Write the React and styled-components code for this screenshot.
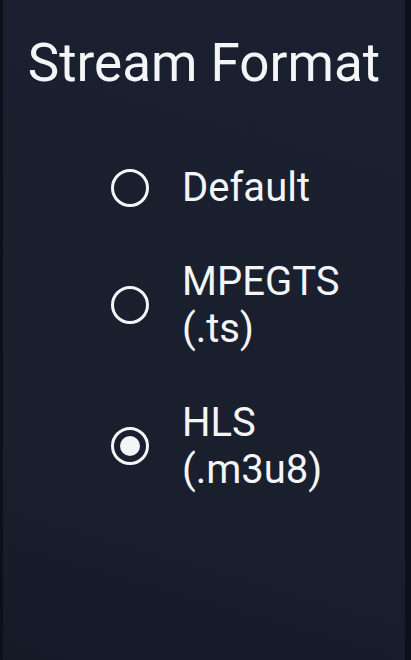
import styled, { createGlobalStyle } from "styled-components";

const GlobalStyle = createGlobalStyle`
  html, body {
    margin: 0;
    padding: 0;
    background: #0c101b;
  }
  body {
    font-family: Roboto, "Noto Sans", "Liberation Sans", sans-serif;
  }
`;

const Screen = styled.div`
  height: 660px;
  margin: 0 6px 0 3px;
  background: linear-gradient(196deg, #1b2030 0%, #1a1f2e 72%, #151a27 100%);
  display: flex;
  flex-direction: column;
  align-items: center;
  padding-top: 32px;
  box-sizing: border-box;
`;

const Title = styled.h1`
  margin: 0;
  font-size: 53px;
  font-weight: 400;
  color: #f4f5f7;
  white-space: nowrap;
`;

const Options = styled.div`
  align-self: stretch;
  display: flex;
  flex-direction: column;
  gap: 47px;
  margin-top: 70px;
  padding-left: 108px;
`;

const Option = styled.label`
  display: flex;
  align-items: center;
  gap: 33px;
  cursor: pointer;
`;

const Ring = styled.span`
  flex: none;
  width: 38px;
  height: 38px;
  border-radius: 50%;
  border: 3.5px solid #f4f5f7;
  box-sizing: border-box;
  display: flex;
  align-items: center;
  justify-content: center;

  &::after {
    content: "";
    width: 20px;
    height: 20px;
    border-radius: 50%;
    background: #f4f5f7;
    display: ${(p) => (p.$checked ? "block" : "none")};
  }
`;

const Label = styled.span`
  width: 170px;
  font-size: 40px;
  line-height: 47px;
  color: #f4f5f7;
`;

const options = [
  { label: "Default", value: "default" },
  { label: "MPEGTS (.ts)", value: "ts" },
  { label: "HLS (.m3u8)", value: "hls" },
];

export default function App() {
  const selected = "hls";
  return (
    <>
      <GlobalStyle />
      <Screen>
        <Title>Stream Format</Title>
        <Options>
          {options.map((o) => (
            <Option key={o.value}>
              <Ring $checked={o.value === selected} />
              <Label>{o.label}</Label>
            </Option>
          ))}
        </Options>
      </Screen>
    </>
  );
}
